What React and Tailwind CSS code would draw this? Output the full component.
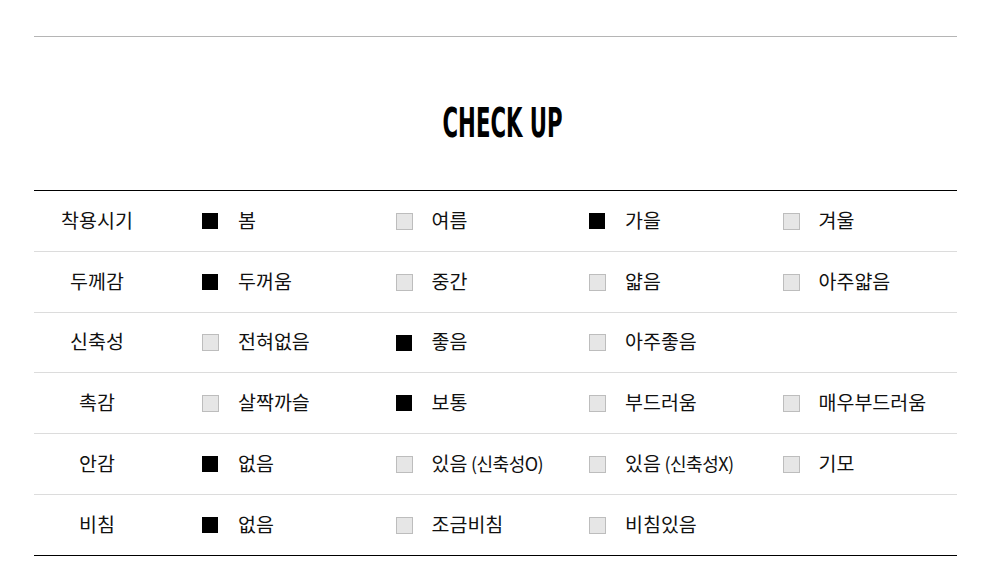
import React from 'react'

const rows = [
  { label: '착용시기', opts: [['봄', 1], ['여름', 0], ['가을', 1], ['겨울', 0]] },
  { label: '두께감', opts: [['두꺼움', 1], ['중간', 0], ['얇음', 0], ['아주얇음', 0]] },
  { label: '신축성', opts: [['전혀없음', 0], ['좋음', 1], ['아주좋음', 0]] },
  { label: '촉감', opts: [['살짝까슬', 0], ['보통', 1], ['부드러움', 0], ['매우부드러움', 0]] },
  { label: '안감', opts: [['없음', 1], ['있음 (신축성O)', 0], ['있음 (신축성X)', 0], ['기모', 0]] },
  { label: '비침', opts: [['없음', 1], ['조금비침', 0], ['비침있음', 0]] },
]

function Box({ on }) {
  return on ? (
    <span className="w-4 h-4 bg-black shrink-0" />
  ) : (
    <span className="w-[17px] h-[17px] bg-[#e6e6e6] border border-[#bdbdbd] shrink-0" />
  )
}

export default function App() {
  return (
    <div className="bg-white w-[997px] h-[583px] pl-[34px] pr-[40px] pt-[36px] text-[#111]" style={{ fontFamily: '"Noto Sans CJK KR", "Noto Sans", sans-serif' }}>
      <div className="border-t border-[#b5b5b5]" />
      {/* Title */}
      <h2
        className="text-center text-[40px] font-bold text-black h-[38px] leading-[38px] mt-[67px] pl-[24px] scale-x-[0.59]"
        style={{ fontFamily: '"DejaVu Sans Condensed", "Liberation Sans", sans-serif' }}
      >
        CHECK UP
      </h2>
      <div className="mt-[48px] border-t border-black border-b">
        {rows.map((r, i) => (
          <div key={i} className={`flex items-center ${i === 0 || i === 2 ? 'h-[60px]' : 'h-[61px]'} ${i ? 'border-t border-[#dcdcdc]' : ''}`}>
            <div className="w-[126px] text-center text-[19.5px] leading-none mb-[3px]">{r.label}</div>
            {r.opts.map(([t, on], j) => (
              <div key={j} className="w-[193.5px] flex items-center pl-[42px]">
                <Box on={on} />
                <span className={`text-[19.5px] leading-none mb-[3px] ${on ? 'ml-5' : 'ml-[19px]'}`}>
                  {t.includes('(') ? (
                    <>
                      {t.split(' ')[0]}
                      <span className="text-[18px] tracking-[-0.5px]"> {t.split(' ')[1]}</span>
                    </>
                  ) : t}
                </span>
              </div>
            ))}
          </div>
        ))}
      </div>
    </div>
  )
}
